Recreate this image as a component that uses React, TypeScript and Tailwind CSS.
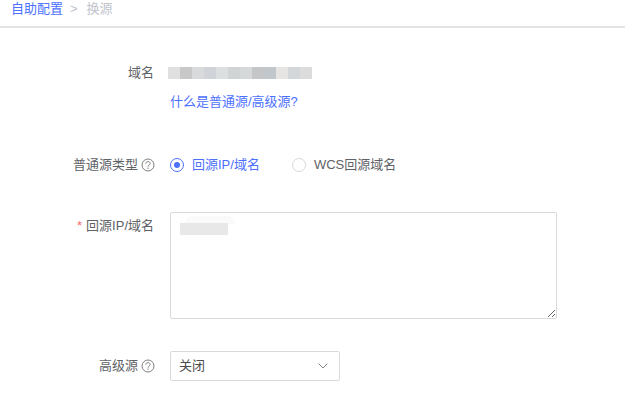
import React from 'react';
import { ChevronDown } from 'lucide-react';

const blurColors = ['#e0e0e0', '#c8c8c8', '#d8dadc', '#d0d4d8', '#dcdfdf', '#d0d4d4', '#d6d9d9', '#c4c6c8', '#c2c7cb', '#e6e5e3', '#d3d7da', '#dcdcdc'];

const HelpIcon = () => (
  <svg width="14" height="14" viewBox="0 0 14 14" fill="none" className="shrink-0">
    <circle cx="7" cy="7" r="6" stroke="#808080" />
    <path d="M4.8 5.6c0-1.2 1-2 2.2-2s2.2.8 2.2 1.9c0 1.5-2.2 1.6-2.2 3.1" stroke="#808080" />
    <rect x="6.4" y="9.6" width="1.2" height="1.2" fill="#808080" />
  </svg>
);

const App: React.FC = () => {
  return (
    <div className="w-[625px] h-[407px] overflow-hidden bg-white text-[13px] text-[#606266]" style={{ fontFamily: '"Liberation Sans", "Noto Sans CJK SC", sans-serif' }}>
      <div className="h-[28px] border-b-2 border-[#e4e4e4] pl-[11px] flex items-start leading-[18px]">
        <span className="text-[#4d70ff]">自助配置</span>
        <span className="text-[#c0c4cc] ml-[7px]">&gt;</span>
        <span className="text-[#c0c4cc] ml-[9px]">换源</span>
      </div>

      <div className="flex mt-[36px] h-[18px] items-center">
        <div className="w-[154px] text-right">域名</div>
        <div className="ml-[14px] flex h-[12px]">
          {blurColors.map((c, i) => (
            <div key={i} className="w-[12px] h-full" style={{ backgroundColor: c }} />
          ))}
        </div>
      </div>

      <div className="ml-[170px] mt-[11px] h-[18px] leading-[18px] text-[#4d70ff]">什么是普通源/高级源?</div>

      <div className="flex mt-[45px] h-[18px] items-center">
        <div className="w-[155px] flex justify-end items-center gap-[3px]">
          <span>普通源类型</span>
          <HelpIcon />
        </div>
        <div className="ml-[15px] flex items-center">
          <span className="w-[14px] h-[14px] rounded-full border border-[#4d70ff] flex items-center justify-center">
            <span className="w-[6px] h-[6px] rounded-full bg-[#4d70ff]" />
          </span>
          <span className="ml-[8px] text-[#4d70ff]">回源IP/域名</span>
          <span className="ml-[32px] w-[14px] h-[14px] rounded-full border border-[#d9d9d9]" />
          <span className="ml-[8px]">WCS回源域名</span>
        </div>
      </div>

      <div className="flex mt-[38px]">
        <div className="w-[154px] text-right leading-[18px] mt-[5px]">
          <span className="text-[#f56c6c] mr-[4px]">*</span>回源IP/域名
        </div>
        <div className="relative ml-[16px]">
          <textarea readOnly className="block w-[387px] h-[107px] border border-[#d9d9d9] rounded-[2px] bg-white outline-none" />
          <div className="absolute left-[15px] top-[4px] w-[50px] h-[8px] rounded-t-full bg-[#fafafa]" />
          <div className="absolute left-[10px] top-[11px] w-[48px] h-[12px] bg-[#e8e8e8]" />
        </div>
      </div>

      <div className="flex mt-[32px]">
        <div className="w-[155px] flex justify-end items-center gap-[3px]">
          <span>高级源</span>
          <HelpIcon />
        </div>
        <div className="ml-[15px] w-[170px] h-[30px] border border-[#d9d9d9] rounded-[2px] flex items-center justify-between pl-[8px] pr-[8px] text-[#4a4a4a]">
          <span>关闭</span>
          <ChevronDown size={16} color="#808088" strokeWidth={1.5} />
        </div>
      </div>
    </div>
  );
};

export default App;
